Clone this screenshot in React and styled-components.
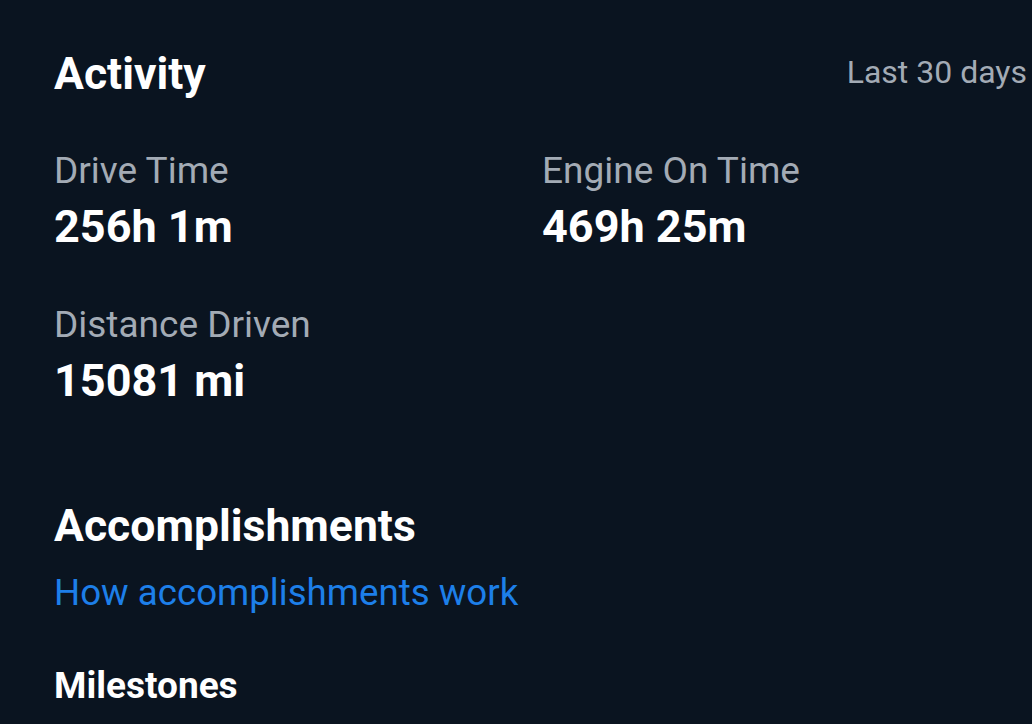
import styled, { createGlobalStyle } from "styled-components";

const GlobalStyle = createGlobalStyle`
  html, body {
    margin: 0;
    padding: 0;
    background: #0a1420;
  }
  body {
    font-family: Roboto, "Noto Sans", Arial, sans-serif;
    -webkit-font-smoothing: antialiased;
  }
`;

const Page = styled.div`
  width: 1032px;
  height: 724px;
  overflow: hidden;
  background: #0a1420;
  color: #ffffff;
  padding: 45px 5px 0 54px;
  box-sizing: border-box;
`;

const Header = styled.div`
  display: flex;
  justify-content: space-between;
  align-items: flex-start;
`;

const Title = styled.h2`
  margin: 0;
  font-size: 44.5px;
  font-weight: 700;
  line-height: 58px;
`;

const Period = styled.span`
  font-size: 32px;
  line-height: 40px;
  margin-top: 7px;
  color: #a3abb5;
`;

const StatGrid = styled.div`
  display: grid;
  grid-template-columns: 488px 1fr;
  row-gap: 48px;
  margin-top: 46px;
`;

const Stat = styled.div`
  display: flex;
  flex-direction: column;
  gap: 6px;
`;

const Label = styled.span`
  font-size: 37px;
  line-height: 44px;
  color: #a3abb5;
`;

const Value = styled.span`
  font-size: 45px;
  font-weight: 700;
  line-height: 56px;
`;

const Section = styled.section`
  margin-top: 88px;
`;

const Link = styled.a`
  display: block;
  font-size: 36.7px;
  line-height: 48px;
  color: #1d7fe9;
  text-decoration: none;
  margin-top: 14px;
`;

const SubTitle = styled.h3`
  margin: 46px 0 0;
  font-size: 37px;
  font-weight: 700;
  line-height: 46px;
`;

const stats = [
  { label: "Drive Time", value: "256h 1m" },
  { label: "Engine On Time", value: "469h 25m" },
  { label: "Distance Driven", value: "15081 mi" },
];

export default function App() {
  return (
    <>
      <GlobalStyle />
      <Page>
        <Header>
          <Title>Activity</Title>
          <Period>Last 30 days</Period>
        </Header>
        <StatGrid>
          {stats.map((s) => (
            <Stat key={s.label}>
              <Label>{s.label}</Label>
              <Value>{s.value}</Value>
            </Stat>
          ))}
        </StatGrid>
        <Section>
          <Title>Accomplishments</Title>
          <Link href="#">How accomplishments work</Link>
          <SubTitle>Milestones</SubTitle>
        </Section>
      </Page>
    </>
  );
}
